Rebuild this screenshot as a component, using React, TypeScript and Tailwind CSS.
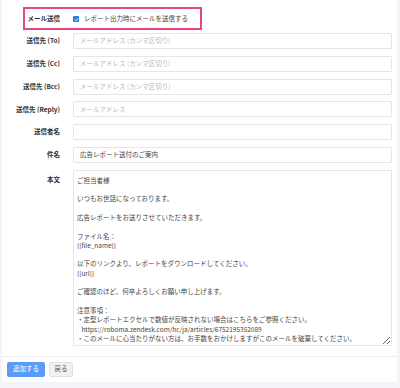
import React from 'react';

const fieldRows: { label: string; placeholder?: string; value?: string }[] = [
  { label: '送信先 (To)', placeholder: 'メールアドレス (カンマ区切り)' },
  { label: '送信先 (Cc)', placeholder: 'メールアドレス (カンマ区切り)' },
  { label: '送信先 (Bcc)', placeholder: 'メールアドレス (カンマ区切り)' },
  { label: '送信先 (Reply)', placeholder: 'メールアドレス' },
  { label: '送信者名' },
  { label: '件名', value: '広告レポート送付のご案内' },
];

const bodyText = `ご担当者様

いつもお世話になっております。

広告レポートをお送りさせていただきます。

ファイル名：
{{file_name}}

以下のリンクより、レポートをダウンロードしてください。
{{url}}

ご確認のほど、何卒よろしくお願い申し上げます。

注意事項：
・定型レポートエクセルで数値が反映されない場合はこちらをご参照ください。
   https://roboma.zendesk.com/hc/ja/articles/6752195352089
・このメールに心当たりがない方は、お手数をおかけしますがこのメールを破棄してください。`;

const App: React.FC = () => {
  return (
    <div
      className="w-[400px] h-[388px] bg-[#f3f4f8] overflow-hidden pl-[2px] pr-[3px] text-[#333]"
      style={{ fontFamily: "'Noto Sans CJK JP', 'Noto Sans', sans-serif" }}
    >
      <div className="bg-white h-[382px] relative flex flex-col">
        {/* highlight annotation */}
        <div className="absolute left-[21px] top-[7px] w-[179px] h-[23px] border-2 border-[#e94484] pointer-events-none" />

        <div className="flex flex-col gap-[6.8px] pt-[11px] pr-[5px]">
          {/* Send mail toggle */}
          <div className="grid grid-cols-[58px_1fr] gap-x-[13px] items-center h-[16px] mb-[-0.8px]">
            <div className="text-right text-[6.5px] font-bold">メール送信</div>
            <label className="flex items-center gap-[5px] text-[6.5px] text-[#444]">
              <span className="w-[6px] h-[6px] rounded-[1px] bg-[#2f7de1] flex items-center justify-center">
                <svg viewBox="0 0 10 10" className="w-[5px] h-[5px]">
                  <path d="M2 5.2 L4.2 7.4 L8 2.8" fill="none" stroke="#fff" strokeWidth="1.8" />
                </svg>
              </span>
              レポート出力時にメールを送信する
            </label>
          </div>

          {fieldRows.map((row) => (
            <div key={row.label} className="grid grid-cols-[58px_1fr] gap-x-[13px] items-center">
              <div className="text-right text-[6.5px] font-bold whitespace-nowrap">{row.label}</div>
              <div className="h-[16px] border border-[#e6e6e6] rounded-[1px] flex items-center pl-[6px] text-[6.5px]">
                {row.value ? (
                  <span className="text-[#444]">{row.value}</span>
                ) : (
                  <span className="text-[#b8b8b8]">{row.placeholder ?? ''}</span>
                )}
              </div>
            </div>
          ))}

          {/* Body */}
          <div className="grid grid-cols-[58px_1fr] gap-x-[13px] items-start">
            <div className="text-right text-[6.5px] font-bold pt-[5px] leading-[9.3px]">本文</div>
            <textarea
              readOnly
              spellCheck={false}
              value={bodyText}
              className="h-[176px] w-full border border-[#e6e6e6] rounded-[1px] pl-[3px] pt-[5px] text-[6.5px] leading-[9.3px] text-[#444] resize-y outline-none overflow-hidden"
              style={{ fontFamily: "'Noto Sans CJK JP', 'Noto Sans', sans-serif" }}
            />
          </div>
        </div>

        {/* Footer */}
        <div className="mt-[10px] border-t border-[#eeeeee] flex items-center gap-[4px] pl-[5px] pt-[5px]">
          <button className="h-[15px] w-[38px] bg-[#5b9cf7] rounded-[2px] text-white text-[6.5px]">
            追加する
          </button>
          <button className="h-[15px] w-[24px] bg-[#f1f1f1] border border-[#e0e0e0] rounded-[2px] text-[#555] text-[6.5px]">
            戻る
          </button>
        </div>
      </div>
    </div>
  );
};

export default App;
